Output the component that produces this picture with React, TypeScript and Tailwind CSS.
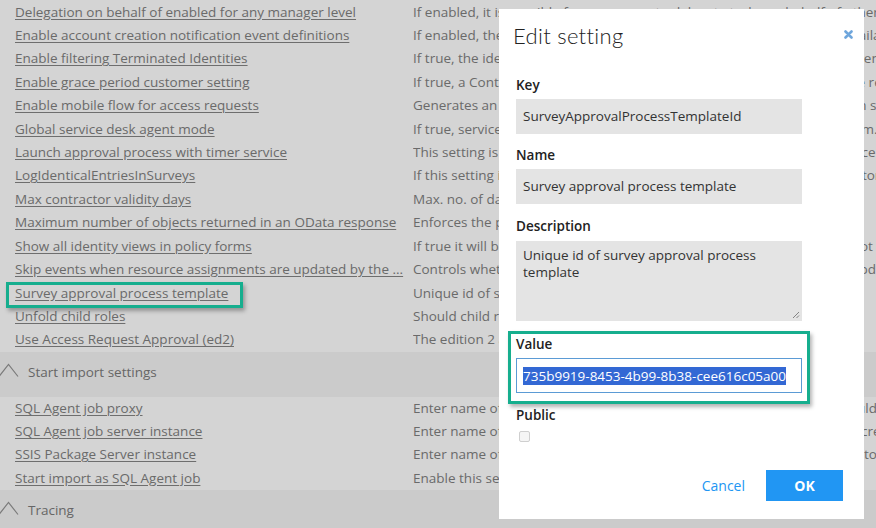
import React from "react";

const topRows: [string, string][] = [
  ["Delegation on behalf of enabled for any manager level", "If enabled, it is possible for a manager to delegate tasks on behalf of others for special cases."],
  ["Enable account creation notification event definitions", "If enabled, the event definitions for account creation notification are available in the system."],
  ["Enable filtering Terminated Identities", "If true, the identities that are terminated will be filtered out from final identity list."],
  ["Enable grace period customer setting", "If true, a Contractor will have a grace period before the access rights are removed."],
  ["Enable mobile flow for access requests", "Generates an access request flow for mobile devices where the user can see the request."],
  ["Global service desk agent mode", "If true, service desk agents can act on behalf of all identities in the system."],
  ["Launch approval process with timer service", "This setting is used to launch the approval process using the timer service when the time has come."],
  ["LogIdenticalEntriesInSurveys", "If this setting is enabled, identical entries in surveys will be logged and stored for later review."],
  ["Max contractor validity days", "Max. no. of days a contractor can be valid."],
  ["Maximum number of objects returned in an OData response", "Enforces the page size of OData responses."],
  ["Show all identity views in policy forms", "If true it will be possible to select all identity views in the policy forms, not only the Views."],
  ["Skip events when resource assignments are updated by the ...", "Controls whether events are skipped when resource assignments are updated by the timer mechanism."],
  ["Survey approval process template", "Unique id of survey approval process template"],
  ["Unfold child roles", "Should child roles be unfolded"],
  ["Use Access Request Approval (ed2)", "The edition 2 approval process"],
];

const importRows: [string, string][] = [
  ["SQL Agent job proxy", "Enter name of the SQL Server Agent proxy account that the import should be run as."],
  ["SQL Agent job server instance", "Enter name of the SQL Server instance where the SQL Agent job will be created."],
  ["SSIS Package Server instance", "Enter name of the SSIS server instance where the import packages are stored."],
  ["Start import as SQL Agent job", "Enable this setting to start import as SQL Agent job"],
];

function Row({ name, desc, h }: { name: string; desc: string; h: string }) {
  return (
    <div className={`flex items-center whitespace-nowrap ${h}`}>
      <div className="w-[413px] shrink-0 pl-[15px] pr-[6px] overflow-hidden">
        <span className="underline decoration-[#6e6e6e] underline-offset-[2px]">{name}</span>
      </div>
      <div className="flex-1 min-w-0 overflow-hidden">{desc}</div>
    </div>
  );
}

function Chevron() {
  return (
    <svg width="20" height="15" viewBox="0 0 20 15" className="shrink-0">
      <polyline points="-1,13.5 8.5,1.5 18,13.5" fill="none" stroke="#7a7a7a" strokeWidth="1.2" />
    </svg>
  );
}

function SectionHeader({ title }: { title: string }) {
  return (
    <div className="h-[45px] bg-[#cbcbcb] flex items-start pt-[10px] gap-[8px]">
      <div className="pt-[1px]">
        <Chevron />
      </div>
      <span className="leading-[20px] text-[#666]">{title}</span>
    </div>
  );
}

function Label({ children }: { children: React.ReactNode }) {
  return <div className="h-[20px] leading-[20px] font-semibold text-[#222]">{children}</div>;
}

export default function App() {
  return (
    <div className="relative w-[876px] h-[528px] overflow-hidden bg-[#d4d4d4] text-[#6a6a6a] text-[13.5px] font-['Open_Sans',sans-serif]">
      <div className="pt-[0.5px]">
        {topRows.map(([n, d]) => (
          <Row key={n} name={n} desc={d} h="h-[23.43px] leading-[23.43px]" />
        ))}
      </div>
      <SectionHeader title="Start import settings" />
      <div>
        {importRows.map(([n, d]) => (
          <Row key={n} name={n} desc={d} h="h-[23.25px] leading-[23.25px]" />
        ))}
      </div>
      <SectionHeader title="Tracing" />

      {/* highlight frame around link */}
      <div className="absolute left-[6px] top-[282px] w-[237px] h-[26px] border-[3px] border-[#16ae8e] shadow-[2px_3px_4px_rgba(0,0,0,0.3)]" />

      {/* dialog */}
      <div className="absolute left-[499px] top-[9px] w-[365px] h-[510px] bg-white text-[#333]">
        <div className="relative h-[50px] pl-[14px] pt-[12px]">
          <div className="text-[22px] leading-[30px] font-light text-[#222] font-['Lato','Open_Sans',sans-serif] tracking-[0.3px]">
            Edit setting
          </div>
          <svg
            width="9"
            height="9"
            viewBox="0 0 9 9"
            className="absolute left-[345px] top-[21px]"
          >
            <path d="M1.5 1.5 L7.5 7.5 M7.5 1.5 L1.5 7.5" stroke="#6fa6dc" strokeWidth="2.6" strokeLinecap="round" />
          </svg>
        </div>
        <div className="px-[17px] pt-[16px]">
          <Label>Key</Label>
          <div className="mt-[4px] h-[35px] bg-[#e4e4e4] pl-[7px] flex items-center w-[286px]">
            SurveyApprovalProcessTemplateId
          </div>
          <div className="mt-[11px]">
            <Label>Name</Label>
          </div>
          <div className="mt-[4px] h-[35px] bg-[#e4e4e4] pl-[7px] flex items-center w-[286px]">
            Survey approval process template
          </div>
          <div className="mt-[12px]">
            <Label>Description</Label>
          </div>
          <div className="relative mt-[5px] h-[80px] bg-[#e4e4e4] pl-[7px] pr-[20px] pt-[6px] leading-[17.3px] w-[286px]">
            Unique id of survey approval process template
            <svg width="8" height="8" viewBox="0 0 8 8" className="absolute right-[2px] bottom-[2px]">
              <path d="M7 1 L1 7 M7 4.5 L4.5 7" stroke="#777" strokeWidth="0.9" />
            </svg>
          </div>
          <div className="mt-[10px] -mx-[8px] w-[302px] border-[3px] border-[#16ae8e] pl-[5px] pb-[8px] shadow-[2px_3px_4px_rgba(0,0,0,0.3)]">
            <Label>Value</Label>
            <div className="mt-[4px] h-[35px] w-[286px] border border-[#5b9bd5] bg-white pl-[6px] flex items-center">
              <span className="bg-[#3368d4] text-white leading-[18px]">735b9919-8453-4b99-8b38-cee616c05a00</span>
            </div>
          </div>
          <div className="mt-[1px]">
            <Label>Public</Label>
          </div>
          <div className="mt-[6px] ml-[3px] w-[11px] h-[11px] rounded-[2px] border border-[#cfcfcf] bg-[#f5f5f5]" />
          <div className="mt-[28px] flex items-center justify-end gap-[21px] pr-[4px]">
            <span className="text-[#2196f3] text-[14px]">Cancel</span>
            <div className="w-[77px] h-[31px] bg-[#2196f3] text-white font-bold text-[14px] flex items-center justify-center">
              OK
            </div>
          </div>
        </div>
      </div>
    </div>
  );
}
